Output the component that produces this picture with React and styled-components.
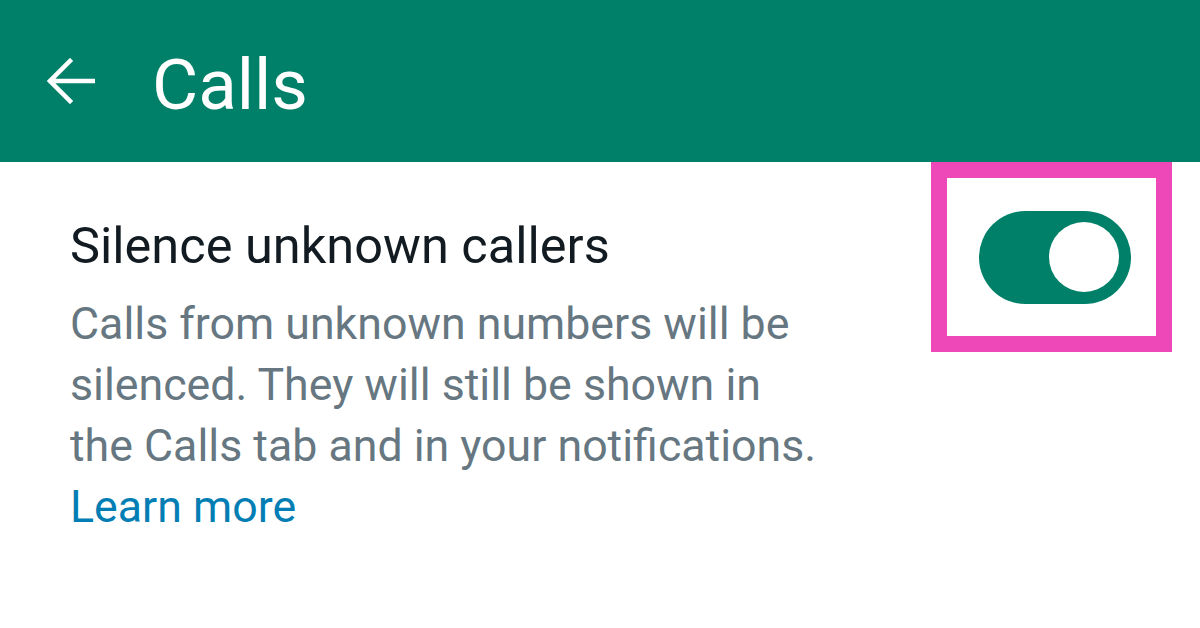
import React from "react";
import styled, { createGlobalStyle } from "styled-components";

const Global = createGlobalStyle`
  html, body { margin: 0; padding: 0; background: #ffffff; }
  body { font-family: Roboto, "Noto Sans", sans-serif; width: 1200px; height: 628px; overflow: hidden; }
`;

const Page = styled.div`
  width: 1200px;
  height: 628px;
  background: #ffffff;
  display: flex;
  flex-direction: column;
`;

const Toolbar = styled.header`
  height: 162px;
  background: #008069;
  display: flex;
  align-items: center;
  padding-left: 46px;
  gap: 56px;
  box-sizing: border-box;
`;

const BackButton = styled.button`
  border: 0;
  background: transparent;
  padding: 0;
  width: 50px;
  height: 50px;
  display: flex;
  align-items: center;
  justify-content: center;
  margin-top: 0px;
`;

const Title = styled.h1`
  margin: 0;
  color: #ffffff;
  font-family: Roboto, sans-serif;
  font-weight: 400;
  font-size: 71px;
  line-height: 1;
  margin-top: 6px;
`;

const Row = styled.div`
  display: flex;
  align-items: flex-start;
  padding: 0 0 0 70px;
`;

const TextCol = styled.div`
  flex: 1;
  padding-top: 54px;
`;

const SettingTitle = styled.div`
  color: #111b21;
  font-size: 50.5px;
  line-height: 60px;
`;

const Description = styled.div`
  color: #667781;
  font-size: 44.7px;
  line-height: 61px;
  width: 755px;
  margin-top: 18px;
`;

const LearnMore = styled.a`
  color: #027eb5;
  text-decoration: none;
  display: block;
`;

const Highlight = styled.div`
  width: 241px;
  height: 190px;
  box-sizing: border-box;
  border: 16px solid #ee48b8;
  margin-right: 28px;
  display: flex;
  align-items: center;
  justify-content: center;
`;

const Track = styled.div`
  width: 152px;
  height: 93px;
  border-radius: 47px;
  background: #008069;
  display: flex;
  align-items: center;
  justify-content: flex-end;
  padding-right: 12px;
  box-sizing: border-box;
  margin-left: 6px;
`;

const Knob = styled.div`
  width: 70px;
  height: 70px;
  border-radius: 50%;
  background: #ffffff;
`;

export default function App() {
  return (
    <Page>
      <Global />
      <Toolbar>
        <BackButton aria-label="Back">
          <svg width="48" height="46" viewBox="0 0 48 46" fill="none">
            <path d="M46 23 H4 M23 3 L3 23 L23 43" stroke="#ffffff" strokeWidth="4.5" strokeLinecap="square" />
          </svg>
        </BackButton>
        <Title>Calls</Title>
      </Toolbar>
      <Row>
        <TextCol>
          <SettingTitle>Silence unknown callers</SettingTitle>
          <Description>
            Calls from unknown numbers will be silenced. They will still be shown in the Calls tab and in your notifications.
            <LearnMore href="#">Learn more</LearnMore>
          </Description>
        </TextCol>
        <Highlight>
          <Track>
            <Knob />
          </Track>
        </Highlight>
      </Row>
    </Page>
  );
}
